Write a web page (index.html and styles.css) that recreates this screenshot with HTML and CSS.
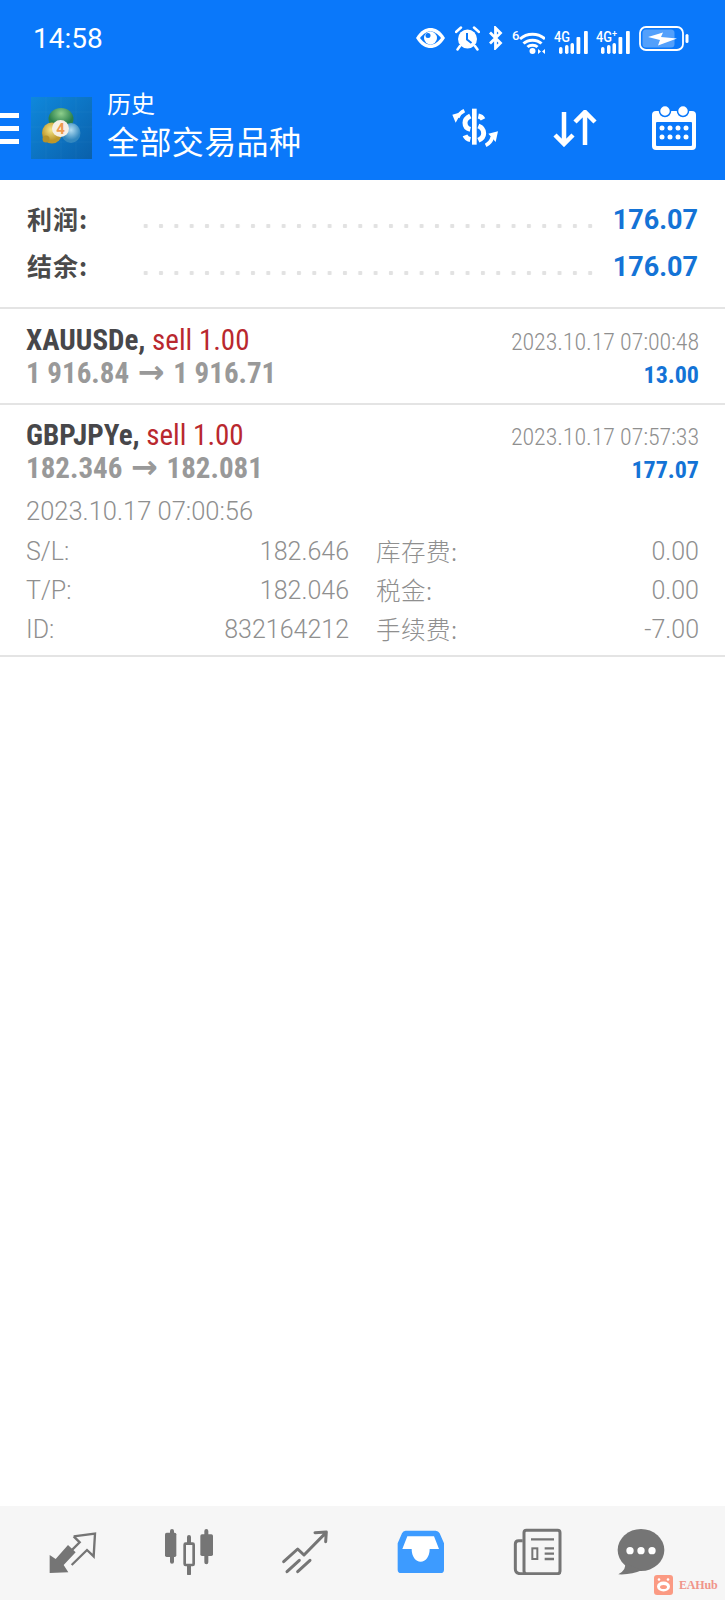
FILE: index.html
```html
<!DOCTYPE html>
<html lang="en">

<head>
    <meta charset="UTF-8">
    <meta name="viewport" content="width=device-width, initial-scale=1.0">
    <title>历史</title>
    <link rel="stylesheet" href="styles.css">
</head>

<body>
    <div class="app">
        <header class="header">
            <div class="status-bar">
                <span class="status-time">14:58</span>
                <div class="status-icons">
                    <svg width="31" height="22" viewBox="0 0 31 22"><path d="M1 11C6 3 11 1 15.500 1S25 3 30 11C25 19 20 21 15.500 21S6 19 1 11Z" fill="#fff"/><path d="M5 11C9 6 12 4.500 15.500 4.500S22 6 26 11C22 16 19 17.500 15.500 17.500S9 16 5 11Z" fill="#0a78fa"/><circle cx="15.500" cy="11" r="6.500" fill="#fff"/><circle cx="13" cy="8.500" r="2.500" fill="#0a78fa"/></svg>
                    <svg width="25" height="25" viewBox="0 0 25 25"><circle cx="12.500" cy="13" r="9.500" fill="#fff"/><path d="M12 7V13.500L16.500 17" fill="none" stroke="#0a78fa" stroke-width="2"/><path d="M1 6L6 1.500M24 6L19 1.500M5 20L2.500 23.500M20 20L22.500 23.500" stroke="#fff" stroke-width="2.500" stroke-linecap="round"/></svg>
                    <svg width="15" height="24" viewBox="0 0 15 24"><path d="M2 6.500L12.500 17L7.500 22V2L12.500 7L2 17.500" fill="none" stroke="#fff" stroke-width="2.800"/></svg>
                    <svg class="icon-tall" width="33" height="28" viewBox="0 -4 33 28"><text x="0" y="10" class="icon-text" font-size="13">6</text><path d="M8 9C15 2.500 26 2.500 33 9M11.500 13.500C16 9 25 9 29.500 13.500M15.500 17C18 14.500 23 14.500 25.500 17" fill="none" stroke="#fff" stroke-width="3"/><circle cx="20.500" cy="21" r="3" fill="#fff"/><path d="M26 19L29 21.500L26 24ZM33 19L30 21.500L33 24Z" fill="#fff"/></svg>
                    <svg class="icon-tall" width="34" height="28" viewBox="0 -4 34 28"><text x="0" y="12" class="icon-text" font-size="15" textLength="16" lengthAdjust="spacingAndGlyphs">4G</text><g fill="#fff"><rect x="5" y="17" width="3.500" height="7" rx="1.700"/><rect x="11" y="15" width="3.500" height="9" rx="1.700"/><rect x="16.500" y="13" width="3.500" height="11" rx="1.700"/><rect x="22.500" y="7" width="3.800" height="17" rx="1"/><rect x="30" y="1" width="3.800" height="23" rx="1"/></g></svg>
                    <svg class="icon-tall" width="34" height="28" viewBox="0 -4 34 28"><text x="0" y="12" class="icon-text" font-size="15" textLength="16" lengthAdjust="spacingAndGlyphs">4G</text><text x="16" y="7" class="icon-text" font-size="9">+</text><g fill="#fff"><rect x="5" y="17" width="3.500" height="7" rx="1.700"/><rect x="11" y="15" width="3.500" height="9" rx="1.700"/><rect x="16.500" y="13" width="3.500" height="11" rx="1.700"/><rect x="22.500" y="7" width="3.800" height="17" rx="1"/><rect x="30" y="1" width="3.800" height="23" rx="1"/></g></svg>
                    <svg width="50" height="25" viewBox="0 0 50 25"><rect x="1" y="1" width="43" height="23" rx="6" fill="none" stroke="#fff" stroke-width="1.800"/><rect x="3.500" y="3.500" width="32" height="18" rx="3.500" fill="#fff" fill-opacity=".3"/><path d="M9 11L24 6.500L22 11L38 12.500L19 19.500L21 14Z" fill="#fff"/><rect x="46.500" y="8" width="3" height="9" rx="1.500" fill="#fff"/></svg>
                </div>
            </div>
            <div class="toolbar">
                <div class="menu-btn"><span></span><span></span><span></span></div>
                <svg class="app-logo" width="61" height="62" viewBox="0 0 61 62">
                    <defs>
                        <linearGradient id="logoBg" x1="0" y1="0" x2="1" y2="1"><stop offset="0" stop-color="#0f88dc"/><stop offset="1" stop-color="#0a60aa"/></linearGradient>
                        <radialGradient id="logoGreen" cx=".5" cy=".25"><stop offset="0" stop-color="#8fcf8c"/><stop offset="1" stop-color="#2a7f4c"/></radialGradient>
                        <radialGradient id="logoYellow" cx=".45" cy=".35"><stop offset="0" stop-color="#f5e689"/><stop offset="1" stop-color="#bd972a"/></radialGradient>
                        <radialGradient id="logoBlue" cx=".5" cy=".35"><stop offset="0" stop-color="#b4def2"/><stop offset="1" stop-color="#3388bf"/></radialGradient>
                    </defs>
                    <rect width="61" height="62" fill="url(#logoBg)"/>
                    <path d="M0 15H61M0 30H61M0 45H61M15 0V62M30 0V62M45 0V62" stroke="#fff" stroke-opacity=".03"/>
                    <ellipse cx="30" cy="22" rx="12.500" ry="11" fill="url(#logoGreen)"/>
                    <ellipse cx="21" cy="36" rx="10" ry="10.500" fill="url(#logoYellow)"/>
                    <circle cx="15" cy="42" r="3.500" fill="#b3922c"/>
                    <ellipse cx="40" cy="36" rx="9.500" ry="10" fill="url(#logoBlue)"/>
                    <circle cx="29.500" cy="31.500" r="8.500" fill="#f6efe4"/>
                    <text x="29.500" y="37" text-anchor="middle" class="logo-digit">4</text>
                </svg>
                <div class="title-block">
                    <div class="title-small">历史</div>
                    <div class="title-large">全部交易品种</div>
                </div>
                <svg class="tool-money" width="46" height="42" viewBox="21 15 138 126">
                    <path d="M88 20V128" stroke="#fff" stroke-width="14"/>
                    <g fill="none" stroke="#fff" stroke-width="15">
                        <path d="M76 42Q60 50 60 62Q60 78 76 82"/>
                        <path d="M100 42Q110 44 114 52"/>
                        <path d="M100 72Q116 78 116 94Q116 108 100 115"/>
                        <path d="M76 113Q64 110 60 100"/>
                    </g>
                    <path d="M38 46Q45 32 58 26M142 105Q138 122 122 130" fill="none" stroke="#fff" stroke-width="11"/>
                    <path d="M22 38L50 30L32 62ZM159 88L130 95L152 120Z" fill="#fff"/>
                </svg>
                <svg class="tool-sort" width="44" height="37" viewBox="553 108 44 37">
                    <path d="M564 110V142M555 133L564 142L573 133M585 143V111M575 120L585 110L595 120" fill="none" stroke="#fff" stroke-width="4.500"/>
                </svg>
                <svg class="tool-calendar" width="44" height="44" viewBox="652 103 44 44">
                    <rect x="652" y="108" width="44" height="39" rx="4" fill="#fff"/>
                    <rect x="656" y="119" width="36" height="24" rx="1" fill="#0a78fa"/>
                    <circle cx="665" cy="108" r="5.500" fill="#fff" stroke="#0a78fa" stroke-width="1.500"/>
                    <circle cx="683" cy="108" r="5.500" fill="#fff" stroke="#0a78fa" stroke-width="1.500"/>
                    <g fill="#fff">
                        <circle cx="662" cy="125" r="2.500"/><circle cx="670" cy="125" r="2.500"/><circle cx="678" cy="125" r="2.500"/><circle cx="686" cy="125" r="2.500"/>
                        <circle cx="662" cy="134" r="2.500"/><circle cx="670" cy="134" r="2.500"/><circle cx="678" cy="134" r="2.500"/><circle cx="686" cy="134" r="2.500"/>
                    </g>
                </svg>
            </div>
        </header>

        <section class="summary">
            <div class="summary-row">
                <span class="summary-label">利润:</span>
                <span class="summary-dots"></span>
                <span class="summary-value">176.07</span>
            </div>
            <div class="summary-row">
                <span class="summary-label">结余:</span>
                <span class="summary-dots"></span>
                <span class="summary-value">176.07</span>
            </div>
        </section>

        <section class="deal deal-first">
            <div class="deal-line">
                <span class="deal-name">XAUUSDe, <em class="deal-type">sell 1.00</em></span>
                <span class="deal-time">2023.10.17 07:00:48</span>
            </div>
            <div class="deal-line">
                <span class="deal-price">1 916.84 <span class="arrow">→</span> 1 916.71</span>
                <span class="deal-profit">13.00</span>
            </div>
        </section>

        <section class="deal">
            <div class="deal-line">
                <span class="deal-name">GBPJPYe, <em class="deal-type">sell 1.00</em></span>
                <span class="deal-time">2023.10.17 07:57:33</span>
            </div>
            <div class="deal-line">
                <span class="deal-price">182.346 <span class="arrow">→</span> 182.081</span>
                <span class="deal-profit">177.07</span>
            </div>
            <div class="deal-open">2023.10.17 07:00:56</div>
            <div class="deal-grid">
                <span>S/L:</span><span class="num">182.646</span><span class="cjk">库存费:</span><span class="num">0.00</span>
                <span>T/P:</span><span class="num">182.046</span><span class="cjk">税金:</span><span class="num">0.00</span>
                <span>ID:</span><span class="num">832164212</span><span class="cjk">手续费:</span><span class="num">-7.00</span>
            </div>
        </section>

        <div class="spacer"></div>

        <nav class="bottom-nav">
            <svg width="60" height="48" viewBox="130 96 180 144">
                <path d="M150 234V180L168 192L205 150L228 172L192 210L206 232Z" fill="#757575"/>
                <path d="M222 124L286 116L282 184L262 165L216 210M222 124L240 142L212 170" fill="none" stroke="#757575" stroke-width="7"/>
            </svg>
            <svg width="60" height="48" viewBox="476 96 180 144">
                <g stroke="#757575" stroke-width="12" stroke-linecap="round">
                    <path d="M515 108V200M566 126V236M618 108V202"/>
                </g>
                <rect x="494" y="113" width="34" height="73" rx="5" fill="#757575"/>
                <rect x="600" y="118" width="38" height="65" rx="5" fill="#757575"/>
                <rect x="553" y="146" width="27" height="64" rx="3" fill="#f6f6f6" stroke="#757575" stroke-width="8"/>
            </svg>
            <svg width="60" height="48" viewBox="825 96 180 144">
                <path d="M851 200L893 162L912 180L975 116M945 113L979 111L977 140M861 230L898 196M893 230L930 196" fill="none" stroke="#757575" stroke-width="9" stroke-linecap="round" stroke-linejoin="round"/>
            </svg>
            <svg width="60" height="48" viewBox="88 96 180 144">
                <path d="M132 107H222Q230 107 234 115L247 145V224Q247 234 237 234H118Q108 234 108 224V145L121 115Q124 107 132 107Z" fill="#3d9bff"/>
                <path d="M137 124H217L232 162H204C204 185 192 200 177 200S150 185 150 162H122Z" fill="#fff"/>
            </svg>
            <svg width="60" height="48" viewBox="435 96 180 144">
                <rect x="486" y="106" width="108" height="130" rx="7" fill="none" stroke="#757575" stroke-width="9"/>
                <path d="M482 137H470Q460 137 460 147V222Q460 236 476 236H490" fill="none" stroke="#757575" stroke-width="9"/>
                <path d="M507 133H576M548 160H576M548 176H576M548 192H576" stroke="#757575" stroke-width="7"/>
                <rect x="511" y="160" width="15" height="32" fill="none" stroke="#757575" stroke-width="6"/>
            </svg>
            <svg class="nav-chat" width="60" height="48" viewBox="748 96 180 144">
                <ellipse cx="838" cy="165" rx="70" ry="63" fill="#757575"/>
                <path d="M790 205Q795 225 770 238Q810 240 840 226Z" fill="#757575"/>
                <circle cx="805" cy="167" r="11" fill="#fff"/><circle cx="838" cy="167" r="11" fill="#fff"/><circle cx="871" cy="167" r="11" fill="#fff"/>
            </svg>
            <div class="watermark">
                <svg width="19" height="20" viewBox="0 0 19 20">
                    <rect width="19" height="20" rx="3" fill="#fb9a83"/>
                    <ellipse cx="9.500" cy="11.500" rx="6.500" ry="5" fill="#fff"/>
                    <circle cx="5" cy="4.500" r="1.300" fill="#fff"/><circle cx="14" cy="4.500" r="1.300" fill="#fff"/>
                    <ellipse cx="9.500" cy="12" rx="3.500" ry="2" fill="#fb9a83"/>
                </svg>
                <span>EAHub</span>
            </div>
        </nav>
    </div>
</body>

</html>
```

FILE: styles.css
```css
* {
    box-sizing: border-box;
}

body {
    margin: 0;
    background-color: #fff;
    font-family: Roboto, "Noto Sans CJK SC", sans-serif;
}

.app {
    width: 725px;
    height: 1600px;
    display: flex;
    flex-direction: column;
    overflow: hidden;
}

/* 顶部蓝色区域 */
.header {
    height: 180px;
    background-color: #0a78fa;
    color: #fff;
}

.status-bar {
    height: 76px;
    display: flex;
    align-items: center;
    justify-content: space-between;
    padding: 0 36px 0 33px;
}

.status-time {
    font-size: 28px;
    font-weight: 400;
}

.status-icons {
    display: flex;
    align-items: center;
    gap: 8.700px;
}

.status-icons svg {
    display: block;
}

.status-icons .icon-tall {
    margin-top: 4px;
}

.icon-text {
    fill: #fff;
    font-family: Roboto, sans-serif;
    font-weight: 500;
}

.logo-digit {
    fill: #ee9a4d;
    font-family: Roboto, sans-serif;
    font-size: 15px;
    font-weight: 700;
}

.toolbar {
    height: 104px;
    display: flex;
    align-items: center;
}

.menu-btn {
    width: 19px;
    display: flex;
    flex-direction: column;
    gap: 8px;
    margin-right: 12px;
}

.menu-btn span {
    height: 5px;
    background-color: #fff;
}

.app-logo {
    display: block;
}

.title-block {
    margin: -7px 0 0 15px;
    font-family: "Noto Sans CJK SC", sans-serif;
    flex: 1;
}

.title-small {
    font-size: 24px;
    line-height: 29px;
    margin-bottom: 2px;
}

.title-large {
    font-size: 32px;
    line-height: 42px;
    letter-spacing: 0.4px;
}

.tool-money,
.tool-sort {
    margin-right: 55px;
}

.tool-calendar {
    margin-right: 29px;
}

/* 利润、结余 */
.summary {
    padding: 17px 27px 16px 27px;
    border-bottom: 2px solid #e4e4e4;
}

.summary-row {
    height: 47px;
    display: flex;
    align-items: center;
}

.summary-label {
    width: 111px;
    margin-top: -6px;
    font-family: "Noto Sans CJK SC", sans-serif;
    font-size: 25px;
    font-weight: 700;
    letter-spacing: 1px;
    color: #4a4a4a;
}

.summary-dots {
    width: 460px;
    height: 6px;
    margin-top: 10px;
    background-image: radial-gradient(circle, #e2e2e2 2px, transparent 2.500px);
    background-size: 15.330px 6px;
    background-repeat: repeat-x;
}

.summary-value {
    margin-left: auto;
    margin-top: -2px;
    font-size: 27px;
    font-weight: 700;
    color: #1473d6;
}

/* 交易记录 */
.deal {
    padding: 13px 26px 0;
    border-bottom: 2px solid #e4e4e4;
}

.deal-first {
    padding-top: 14px;
    padding-bottom: 12px;
}

.deal-line {
    height: 34px;
    display: flex;
    align-items: center;
    justify-content: space-between;
}

.deal-name {
    font-size: 29px;
    font-weight: 700;
    font-stretch: 75%;
    color: #47474a;
}

.deal-type {
    font-style: normal;
    font-weight: 400;
    color: #b9282e;
}

.deal-time {
    margin-top: 3px;
    font-size: 24px;
    font-weight: 300;
    font-stretch: 75%;
    letter-spacing: -0.1px;
    color: #8f8f8f;
}

.deal-price {
    margin-bottom: 2px;
    font-size: 29px;
    font-weight: 700;
    font-stretch: 75%;
    color: #999;
}

.arrow {
    margin: 0 2px;
    font-family: "DejaVu Sans", sans-serif;
    font-size: 32px;
    font-stretch: normal;
    line-height: 1;
}

.deal-profit {
    margin-top: 2px;
    font-size: 24px;
    font-weight: 700;
    font-stretch: 75%;
    color: #1473d6;
}

.deal-open {
    margin-top: 6px;
    height: 39px;
    line-height: 39px;
    font-size: 25.500px;
    font-weight: 300;
    color: #8f8f8f;
}

.deal-grid {
    display: grid;
    grid-template-columns: 100px 223px 160px 1fr;
    grid-auto-rows: 39px;
    align-items: center;
    padding: 1px 0 6px;
    font-size: 25px;
    font-weight: 300;
    color: #8f8f8f;
}

.deal-grid .num {
    text-align: right;
}

.deal-grid .cjk {
    margin: -3px 0 0 27px;
    font-family: "Noto Sans CJK SC", sans-serif;
    font-size: 24.500px;
    letter-spacing: 0.5px;
}

.spacer {
    flex: 1;
}

/* 底部导航 */
.bottom-nav {
    height: 94px;
    display: flex;
    align-items: flex-start;
    gap: 56px;
    padding: 21px 0 0 43px;
    background-color: #f6f6f6;
    position: relative;
}

.nav-chat {
    margin-left: -12px;
}

.watermark {
    position: absolute;
    left: 654px;
    top: 69px;
    display: flex;
    align-items: center;
    gap: 6px;
    font-family: "Liberation Serif", serif;
    font-size: 12px;
    font-weight: 700;
    letter-spacing: -0.2px;
    color: #f0948a;
}
```
